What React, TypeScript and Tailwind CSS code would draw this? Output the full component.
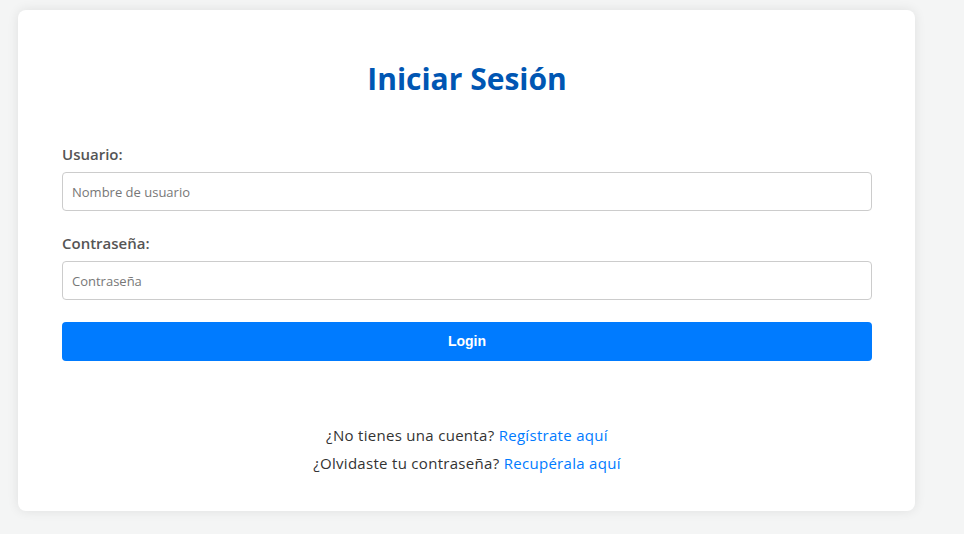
export default function App() {
  return (
    <div className="min-h-[534px] w-full bg-[#f4f5f5] pt-[10px] pl-[18px] font-['Open_Sans',sans-serif]">
      <div className="w-[897px] rounded-lg bg-white pl-[44px] pr-[43px] pt-[46px] pb-[34px] shadow-[0_0_12px_rgba(0,0,0,0.09)]">
        <h2 className="text-center text-[30px] leading-[45px] font-bold text-[#0056b3]">Iniciar Sesión</h2>

        <form className="mt-[42px] flex flex-col">
          <label className="text-[15px] leading-[22px] font-semibold text-[#555]">Usuario:</label>
          <input
            type="text"
            placeholder="Nombre de usuario"
            className="mt-[7px] h-[39px] w-full rounded-[4px] border border-[#ccc] px-[9px] text-[13px] placeholder:text-[#777] outline-none"
          />

          <label className="mt-[21px] text-[15px] leading-[22px] font-semibold text-[#555]">Contraseña:</label>
          <input
            type="password"
            placeholder="Contraseña"
            className="mt-[7px] h-[39px] w-full rounded-[4px] border border-[#ccc] px-[9px] text-[13px] placeholder:text-[#777] outline-none"
          />

          <button
            type="button"
            className="mt-[22px] h-[39px] w-full rounded-[4px] bg-[#007bff] font-['Liberation_Sans',Arial,sans-serif] text-[14px] font-bold text-white"
          >
            Login
          </button>
        </form>

        <div className="mt-[60px] text-center text-[15px] leading-[28px] tracking-[0.3px] text-[#333]">
          <p>
            ¿No tienes una cuenta? <a className="text-[#007bff]">Regístrate aquí</a>
          </p>
          <p>
            ¿Olvidaste tu contraseña? <a className="text-[#007bff]">Recupérala aquí</a>
          </p>
        </div>
      </div>
    </div>
  )
}
